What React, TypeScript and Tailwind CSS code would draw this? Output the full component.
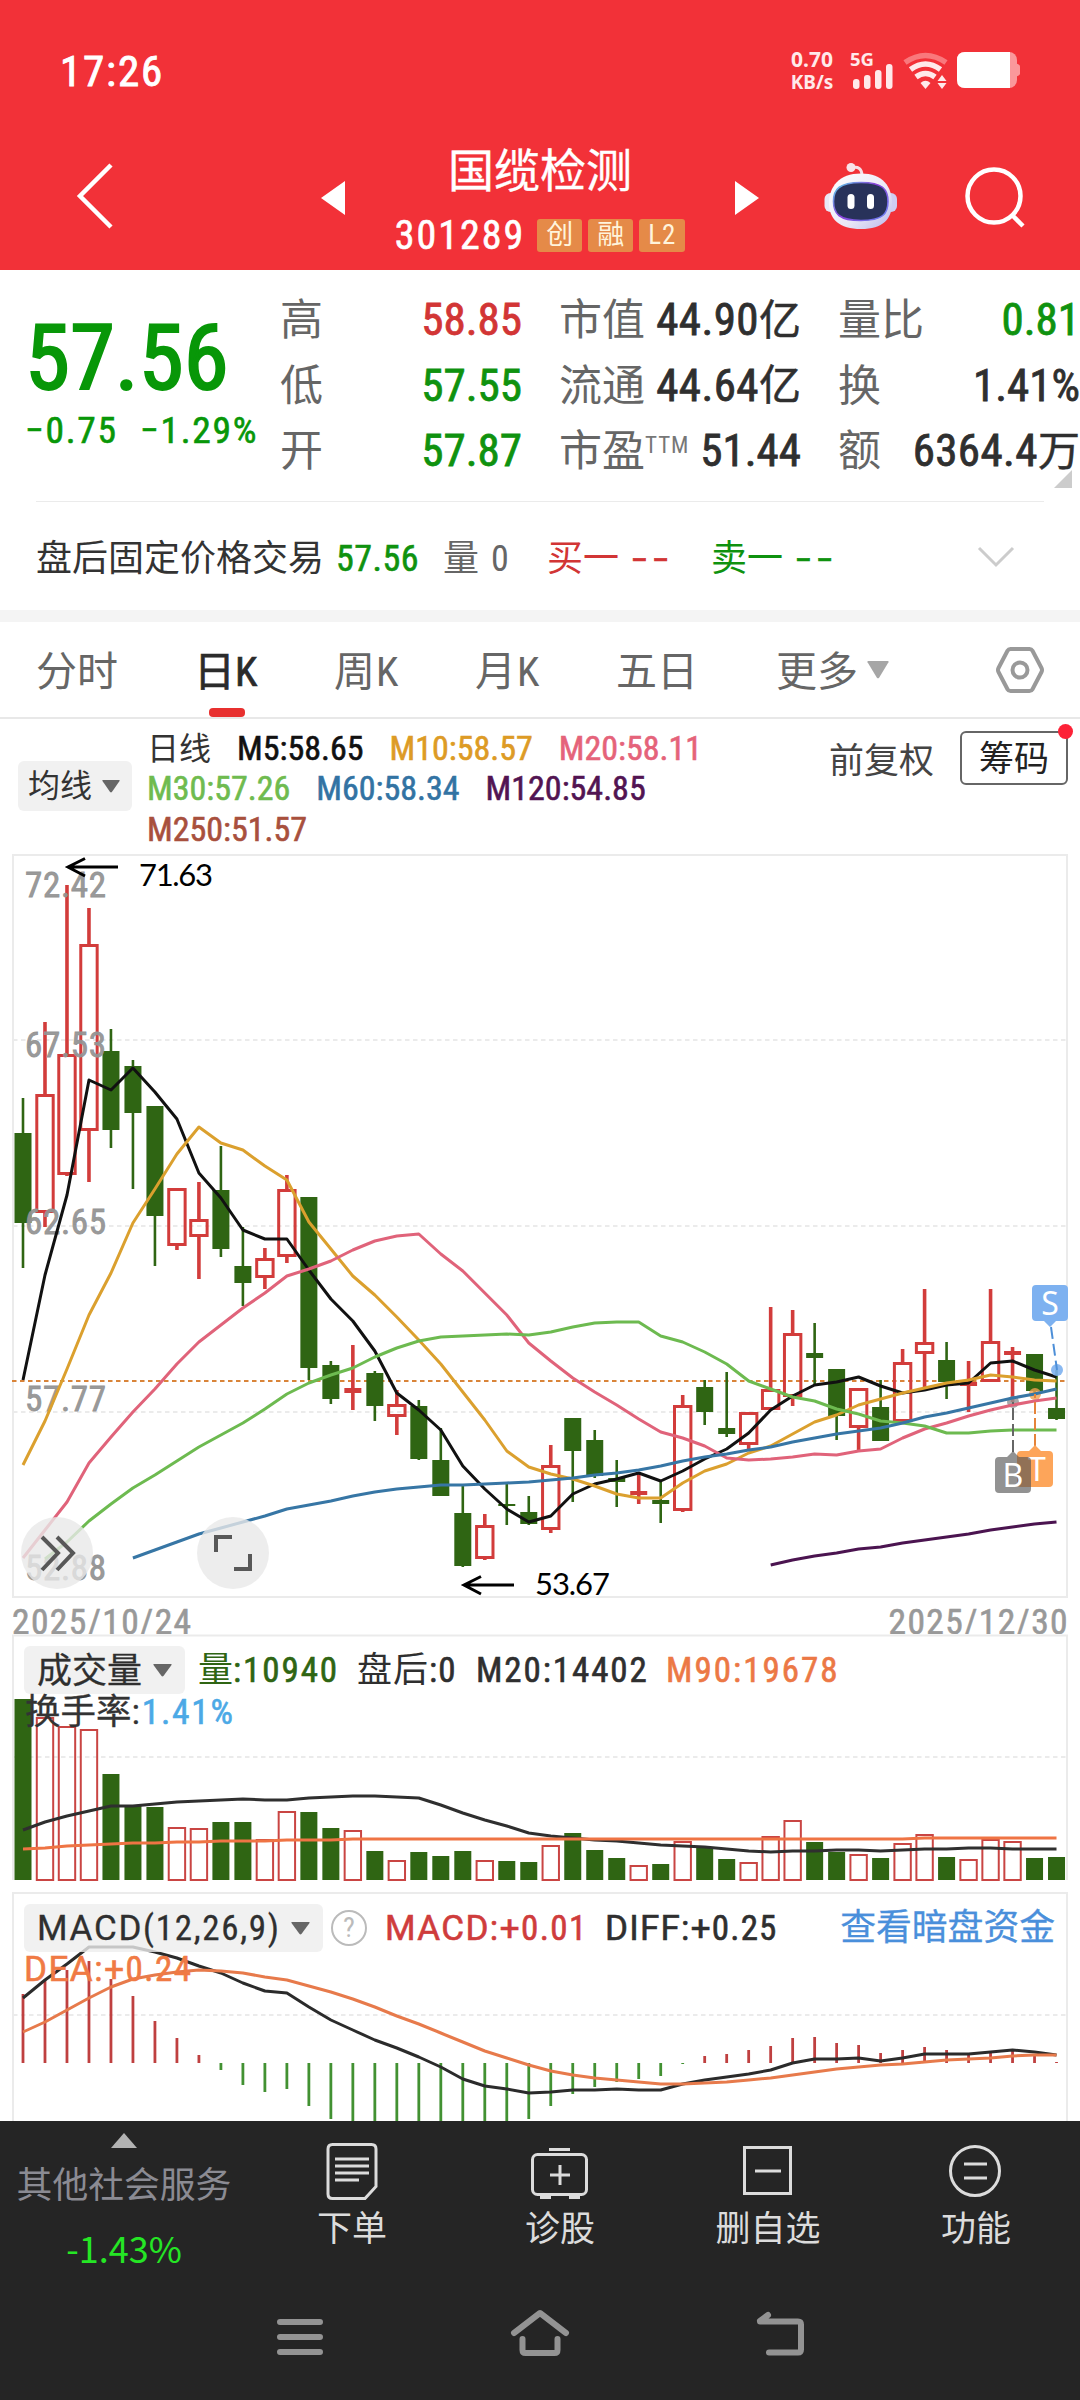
import type { ReactNode } from "react";

// [direction, high, body top, body bottom, low] in chart units
type Candle = ["r" | "g", number, number, number, number];

const CANDLES: Candle[] = [
  ["g", 1098, 1133, 1223, 1268], ["r", 1022, 1094, 1213, 1227], ["r", 885, 1054, 1175, 1176],
  ["r", 908, 944, 1131, 1182], ["g", 1029, 1051, 1130, 1148], ["g", 1060, 1066, 1113, 1189],
  ["g", 1106, 1106, 1216, 1266], ["r", 1188, 1188, 1246, 1250], ["r", 1182, 1219, 1237, 1279],
  ["g", 1146, 1190, 1249, 1257], ["g", 1227, 1266, 1283, 1306], ["r", 1248, 1258, 1278, 1289],
  ["r", 1175, 1189, 1257, 1263], ["g", 1197, 1197, 1368, 1380], ["g", 1361, 1365, 1399, 1404],
  ["r", 1345, 1388, 1393, 1410], ["g", 1371, 1373, 1406, 1421], ["r", 1390, 1404, 1417, 1435],
  ["g", 1400, 1406, 1459, 1460], ["g", 1428, 1460, 1496, 1496], ["g", 1486, 1513, 1566, 1567],
  ["r", 1514, 1525, 1559, 1560], ["g", 1483, 1504, 1506, 1525], ["g", 1496, 1512, 1524, 1525],
  ["r", 1445, 1465, 1530, 1533], ["g", 1418, 1418, 1451, 1502], ["g", 1430, 1440, 1476, 1478],
  ["g", 1460, 1478, 1482, 1507], ["r", 1473, 1491, 1495, 1504], ["g", 1480, 1500, 1504, 1523],
  ["r", 1395, 1405, 1511, 1512], ["g", 1380, 1387, 1412, 1425], ["g", 1372, 1428, 1434, 1437],
  ["r", 1412, 1412, 1445, 1450], ["r", 1307, 1389, 1410, 1410], ["r", 1310, 1333, 1397, 1406],
  ["g", 1323, 1353, 1358, 1385], ["g", 1369, 1369, 1416, 1440], ["r", 1388, 1388, 1428, 1450],
  ["g", 1380, 1407, 1441, 1441], ["r", 1349, 1362, 1422, 1422], ["r", 1289, 1342, 1354, 1387],
  ["g", 1342, 1360, 1382, 1399], ["r", 1361, 1382, 1386, 1412], ["r", 1289, 1341, 1382, 1382],
  ["r", 1347, 1351, 1355, 1402], ["g", 1354, 1354, 1391, 1393], ["g", 1370, 1408, 1419, 1420],
];

const M5 = [1380, 1275, 1195, 1080, 1090, 1068, 1092, 1119, 1173, 1198, 1230, 1239, 1239, 1270, 1299, 1321, 1351, 1393, 1410, 1430, 1466, 1489, 1509, 1522, 1516, 1494, 1484, 1479, 1473, 1481, 1471, 1459, 1449, 1433, 1410, 1396, 1385, 1382, 1377, 1386, 1393, 1390, 1385, 1383, 1363, 1361, 1370, 1377];
const M10 = [1465, 1421, 1369, 1315, 1273, 1223, 1189, 1154, 1127, 1143, 1150, 1166, 1180, 1222, 1249, 1276, 1295, 1317, 1340, 1364, 1392, 1420, 1451, 1467, 1474, 1479, 1486, 1494, 1498, 1498, 1483, 1471, 1464, 1453, 1446, 1434, 1422, 1415, 1405, 1399, 1393, 1388, 1383, 1380, 1375, 1377, 1380, 1381];
const M20 = [1558, 1530, 1502, 1463, 1437, 1412, 1389, 1364, 1342, 1325, 1308, 1293, 1276, 1269, 1261, 1250, 1241, 1236, 1234, 1254, 1271, 1293, 1315, 1343, 1361, 1378, 1392, 1405, 1419, 1432, 1438, 1446, 1458, 1460, 1459, 1457, 1454, 1455, 1451, 1449, 1438, 1429, 1423, 1416, 1410, 1405, 1401, 1398];
const M30 = [1559, 1542, 1521, 1504, 1488, 1475, 1461, 1447, 1435, 1423, 1409, 1394, 1383, 1375, 1368, 1357, 1348, 1341, 1337, 1336, 1335, 1334, 1335, 1332, 1327, 1323, 1322, 1322, 1336, 1342, 1352, 1364, 1381, 1389, 1397, 1401, 1409, 1414, 1421, 1423, 1426, 1433, 1433, 1431, 1430, 1430, 1430];
const M60 = [1558, 1550, 1542, 1534, 1528, 1522, 1516, 1509, 1505, 1501, 1496, 1492, 1489, 1487, 1485, 1485, 1484, 1483, 1482, 1480, 1478, 1475, 1473, 1470, 1466, 1461, 1457, 1454, 1450, 1447, 1442, 1438, 1434, 1431, 1428, 1423, 1417, 1413, 1408, 1403, 1398, 1394, 1389];
const M120 = [1565, 1560, 1556, 1553, 1549, 1547, 1543, 1540, 1537, 1534, 1530, 1527, 1524, 1522];

const VOLUME = [1699, 1717, 1726, 1729, 1774, 1806, 1807, 1827, 1828, 1822, 1822, 1839, 1811, 1812, 1828, 1830, 1851, 1860, 1852, 1856, 1851, 1860, 1861, 1862, 1845, 1833, 1850, 1858, 1865, 1864, 1841, 1848, 1859, 1862, 1836, 1820, 1842, 1852, 1854, 1858, 1843, 1834, 1857, 1859, 1839, 1841, 1858, 1857];
const V20 = [1830, 1822, 1816, 1811, 1806, 1806, 1804, 1802, 1801, 1800, 1799, 1800, 1800, 1798, 1797, 1796, 1796, 1797, 1798, 1805, 1813, 1820, 1826, 1833, 1836, 1838, 1840, 1841, 1843, 1845, 1846, 1847, 1849, 1851, 1852, 1851, 1851, 1850, 1850, 1851, 1850, 1849, 1849, 1848, 1848, 1849, 1849, 1849];
const V90 = [1849, 1848, 1846, 1845, 1844, 1843, 1843, 1842, 1842, 1841, 1841, 1841, 1840, 1840, 1840, ...Array(26).fill(1839), ...Array(7).fill(1838)];

const MACD = [1994, 1980, 1970, 1961, 1979, 1996, 2021, 2038, 2055, 2070, 2085, 2092, 2089, 2106, 2119, 2130, 2130, 2130, 2130, 2130, 2130, 2130, 2130, 2119, 2106, 2094, 2087, 2082, 2079, 2076, 2064, 2056, 2054, 2050, 2046, 2038, 2037, 2043, 2045, 2053, 2050, 2047, 2050, 2053, 2051, 2051, 2056, 2062];
const DIFF = [1998, 1980, 1964, 1947, 1947, 1947, 1952, 1958, 1966, 1973, 1983, 1991, 1993, 2007, 2020, 2030, 2040, 2048, 2057, 2067, 2079, 2086, 2089, 2093, 2092, 2090, 2090, 2089, 2090, 2090, 2084, 2080, 2077, 2074, 2070, 2063, 2059, 2059, 2058, 2061, 2058, 2054, 2054, 2054, 2052, 2050, 2052, 2055];
const DEA = [2032, 2022, 2010, 1998, 1987, 1979, 1975, 1972, 1970, 1971, 1973, 1977, 1980, 1986, 1992, 1999, 2007, 2016, 2024, 2033, 2042, 2051, 2058, 2065, 2071, 2075, 2078, 2080, 2082, 2084, 2084, 2083, 2082, 2080, 2078, 2075, 2072, 2069, 2067, 2065, 2064, 2062, 2060, 2059, 2058, 2056, 2055, 2055];

const RED = "#d23c3b";
const GREEN = "#2f6513";
const px = (i: number) => 23 + i * 21.99;

function Series({ data, start = 0, color }: { data: number[]; start?: number; color: string }) {
  const points = data.map((y, i) => `${px(i + start).toFixed(1)},${y}`).join(" ");
  return <polyline points={points} fill="none" stroke={color} strokeWidth="3" strokeLinejoin="round" />;
}

function Dashes({ y }: { y: number }) {
  return <path d={`M13 ${y}H1066`} stroke="#ebebeb" strokeWidth="2" strokeDasharray="4.5 3.5" />;
}

function Down({ className }: { className: string }) {
  return (
    <svg viewBox="0 0 20 14" preserveAspectRatio="none" className={className}>
      <path d="M1 0h18q1 0 .5 1L11 13q-1 1-2 0L.5 1Q0 0 1 0z" fill="currentColor" />
    </svg>
  );
}

function StatusBar() {
  return (
    <div className="flex h-[110px] items-center pt-8 text-white">
      <span className="ml-[60px] w-[728px] text-[43px] leading-none tracking-[1.800px] [-webkit-text-stroke:0.9px]">17:26</span>
      <div className="flex w-[48px] flex-col items-center font-['Noto_Sans'] text-[21px] leading-[23px] font-bold text-[#ffe9ea]">
        <span>0.70</span>
        <span className="text-[19px]">KB/s</span>
      </div>
      <svg viewBox="840 42 190 60" className="ml-1 h-[60px] w-[190px]">
        <text x="850" y="67" fontSize="17.5" fontWeight="700" fontFamily="Noto Sans" fill="#ffe9ea" textLength="24" lengthAdjust="spacingAndGlyphs">5G</text>
        <g fill="#ffe9ea">
          <rect x="853" y="80" width="6.5" height="10" rx="3" />
          <rect x="864" y="76" width="6.5" height="14" rx="3" />
          <rect x="875" y="71" width="6.5" height="19" rx="3" />
          <rect x="886" y="65" width="6.5" height="25" rx="3" />
          <path d="M925.500 90l-5-6q5-4.500 10 0z" />
          <path d="M942 76l4.500 6h-9zM942 90l4.500-6h-9z" />
        </g>
        <g fill="none" stroke="#ffe9ea" strokeWidth="5.500">
          <path d="M905 63.500q20.500-14 41 0" stroke="#f9787c" />
          <path d="M910.500 70.500q15-11 30 0" />
          <path d="M916 78q9.500-7 19 0" />
        </g>
        <rect x="957" y="53" width="60" height="36" rx="8" fill="#fa989b" />
        <path d="M1016 64.500q4 1 4 3v7q0 2-4 3z" fill="#fa989b" />
        <path d="M965 53h45v36h-45q-8 0-8-8V61q0-8 8-8z" fill="#fff" />
      </svg>
    </div>
  );
}

function Robot() {
  return (
    <svg viewBox="0 0 74 70" className="h-[70px] w-[74px]">
      <defs>
        <linearGradient id="shell" x1="0" y1="0" x2="1" y2="1">
          <stop offset="0" stopColor="#ffffff" />
          <stop offset="0.600" stopColor="#eae8f6" />
          <stop offset="1" stopColor="#b9b8ec" />
        </linearGradient>
        <linearGradient id="rim" x1="0" y1="0" x2="1" y2="0.800">
          <stop offset="0" stopColor="#5bd5ea" />
          <stop offset="0.500" stopColor="#8a3fd8" />
          <stop offset="1" stopColor="#6f7cf0" />
        </linearGradient>
      </defs>
      <path d="M27 7q11-3 11 8" fill="none" stroke="#f6dfe6" strokeWidth="3" />
      <circle cx="27" cy="6.500" r="4.500" fill="#f9e3e9" />
      <rect x="0.500" y="32" width="12" height="19" rx="6" fill="#e9e7f6" />
      <rect x="61" y="32" width="12" height="19" rx="6" fill="#cfcdf2" />
      <path d="M37 12.500C59 12.500 68 26 68 42S59 68 37 68 5 58 5 42s10-29.500 32-29.500z" fill="url(#shell)" />
      <path d="M37 21.500c22 0 27 7 27 19s-5 19-27 19-27.500-7-27.500-19 5.500-19 27.500-19z" fill="#28325a" stroke="url(#rim)" strokeWidth="1.600" />
      <rect x="23.500" y="33" width="7" height="15" rx="3.500" fill="#fff" />
      <rect x="43" y="33" width="7" height="15" rx="3.500" fill="#fff" />
    </svg>
  );
}

function Badge({ children }: { children: ReactNode }) {
  return (
    <span className="flex h-[33px] min-w-[45px] items-center justify-center rounded-[3px] bg-[#e58a48] px-[9px] text-[27px] leading-none text-[#fff4dc]">
      {children}
    </span>
  );
}

function TitleBar() {
  return (
    <div className="flex h-[160px] items-start text-white">
      <svg viewBox="0 0 44 72" className="mt-[50px] ml-[72px] h-[72px] w-[44px]">
        <path d="M39 5L8 36l31 31" fill="none" stroke="#fff" strokeWidth="4.500" />
      </svg>
      <svg viewBox="0 0 24 34" className="mt-[71px] ml-[205px] h-[34px] w-[24px]"><path d="M24 0v34L0 17z" fill="#fff" /></svg>
      <div className="ml-[4px] flex w-[382px] flex-col items-center">
        <h1 className="mt-[36px] text-[46px] leading-[50px] [-webkit-text-stroke:0.4px]">国缆检测</h1>
        <div className="mt-[23px] flex h-[33px] items-center gap-[6px]">
          <span className="mr-[6px] text-[40px] leading-none tracking-[2px] [-webkit-text-stroke:0.6px]">301289</span>
          <Badge>创</Badge>
          <Badge>融</Badge>
          <Badge><span className="tracking-[1px]">L2</span></Badge>
        </div>
      </div>
      <svg viewBox="0 0 24 34" className="mt-[71px] ml-[4px] h-[34px] w-[24px]"><path d="M0 0v34l24-17z" fill="#fff" /></svg>
      <div className="mt-[51px] ml-[65px]"><Robot /></div>
      <svg viewBox="0 0 66 66" className="mt-[54px] ml-[64px] h-[66px] w-[66px]">
        <circle cx="32" cy="32" r="26.500" fill="none" stroke="#fff" strokeWidth="4.500" />
        <path d="M50 51l11 11" stroke="#fff" strokeWidth="4.500" />
      </svg>
    </div>
  );
}

function Stat({ label, value, tone = "text-[#2f2f2f]" }: { label: ReactNode; value: string; tone?: string }) {
  return (
    <div className="flex h-[65.500px] items-center justify-between whitespace-nowrap">
      <span className="flex items-center pt-[2px] text-[43px] leading-none text-[#666]">{label}</span>
      <span className={`text-[45px] leading-none [-webkit-text-stroke:0.8px] ${tone}`}>{value}</span>
    </div>
  );
}

function Unit({ number, unit }: { number: string; unit: string }) {
  return (
    <span className="flex items-center leading-none text-[#2f2f2f]">
      <span className="text-[45px] tracking-[0.400px] [-webkit-text-stroke:0.8px]">{number}</span>
      <span className="pt-[2px] text-[42px] [-webkit-text-stroke:0.5px]">{unit}</span>
    </span>
  );
}

function StatUnit({ label, number, unit }: { label: string; number: string; unit: string }) {
  return (
    <div className="flex h-[65.500px] items-center justify-between whitespace-nowrap">
      <span className="pt-[2px] text-[43px] leading-none text-[#666]">{label}</span>
      <Unit number={number} unit={unit} />
    </div>
  );
}

function Quote() {
  return (
    <section className="relative flex h-[231px] bg-white pt-[17px]">
      <div className="w-[280px] pl-[25px] text-[#089708]">
        <div className="mt-[19px] h-[104px] text-[91px] leading-[104px] [-webkit-text-stroke:2px]">57.56</div>
        <div className="mt-px flex h-[40px] items-center text-[37.500px] leading-none tracking-[1.700px] whitespace-nowrap [-webkit-text-stroke:0.6px]">
          <span className="w-[115px]">−0.75</span>
          <span>−1.29%</span>
        </div>
      </div>
      <div className="w-[242px]">
        <Stat label="高" value="58.85" tone="text-[#d23535]" />
        <Stat label="低" value="57.55" tone="text-[#0f920f]" />
        <Stat label="开" value="57.87" tone="text-[#0f920f]" />
      </div>
      <div className="ml-[37px] w-[242px]">
        <StatUnit label="市值" number="44.90" unit="亿" />
        <StatUnit label="流通" number="44.64" unit="亿" />
        <Stat label={<>市盈<span className="-mt-3 text-[23px] tracking-[1px] text-[#777]">TTM</span></>} value="51.44" />
      </div>
      <div className="ml-[37px] w-[242px]">
        <Stat label="量比" value="0.81" tone="text-[#0f920f]" />
        <Stat label="换" value="1.41%" />
        <StatUnit label="额" number="6364.4" unit="万" />
      </div>
      <svg viewBox="0 0 18 18" className="absolute right-[8px] bottom-[13px] h-[18px] w-[18px]"><path d="M18 0v18H0z" fill="#ccc" /></svg>
    </section>
  );
}

function Blank({ className }: { className: string }) {
  return (
    <span className={className}>
      <span className="inline-block origin-left scale-x-[1.650] tracking-[4px] [-webkit-text-stroke:0.6px]">--</span>
    </span>
  );
}

function AfterHours() {
  return (
    <section className="bg-white">
      <div className="mx-9 h-px bg-[#ebebeb]" />
      <div className="flex h-[108px] items-center pt-[6px] pl-9 text-[36px] leading-none whitespace-nowrap">
        <span className="w-[300px] text-[#333]">盘后固定价格交易</span>
        <span className="w-[107px] text-[#0f920f] tracking-[0.500px] [-webkit-text-stroke:0.6px]">57.56</span>
        <span className="w-[48px] text-[#666]">量</span>
        <span className="w-[56px] text-[#666]">0</span>
        <span className="w-[85px] text-[#d23535]">买一</span>
        <Blank className="w-[79px] text-[#d23535]" />
        <span className="w-[85px] text-[#0f920f]">卖一</span>
        <Blank className="w-[181px] text-[#0f920f]" />
        <svg viewBox="0 0 38 22" className="-mt-1 h-[22px] w-[38px]"><path d="M2 2l17 17L36 2" fill="none" stroke="#ccc" strokeWidth="3" /></svg>
      </div>
      <div className="h-3 bg-[#f4f4f4]" />
    </section>
  );
}

function Tabs() {
  return (
    <nav className="flex h-[97px] items-center border-b-2 border-[#e8e8e8] bg-white pl-9 text-[41px] leading-none whitespace-nowrap text-[#666]">
      <span className="w-[158px] pt-[5px]">分时</span>
      <span className="relative flex h-full w-[140px] items-center pt-[5px] text-[#2b2b2b] [-webkit-text-stroke:0.7px]">
        日K
        <i className="absolute bottom-0 left-[15px] h-[9px] w-[36px] rounded-[4px] bg-[#e8302f]" />
      </span>
      <span className="w-[141px] pt-[5px] tracking-[1px]">周K</span>
      <span className="w-[141px] pt-[5px] tracking-[1px]">月K</span>
      <span className="w-[160px] pt-[5px]">五日</span>
      <span className="w-[91px] pt-[5px]">更多</span>
      <Down className="h-[18px] w-[22px] text-[#a6a6a6]" />
      <svg viewBox="0 0 50 50" className="ml-[106px] h-[50px] w-[50px]" fill="none" stroke="#999" strokeWidth="4">
        <path d="M15.500 4h19q2 0 3 1.800L46.500 23q1 2 0 4L37.500 44.200q-1 1.800-3 1.800h-19q-2 0-3-1.800L3.500 27q-1-2 0-4L12.500 5.800Q13.500 4 15.500 4z" />
        <circle cx="25" cy="25" r="7.500" />
      </svg>
    </nav>
  );
}

function Legend() {
  return (
    <section className="flex h-[130px] bg-white pl-[18px] leading-none whitespace-nowrap">
      <div className="mt-[42px] mr-[15px] flex h-[50px] w-[114px] items-center justify-between rounded-[6px] bg-[#f1f1f1] pr-[12px] pl-[10px] text-[32px] text-[#333]">
        均线
        <Down className="h-[13px] w-[18px] text-[#666]" />
      </div>
      <div className="flex w-[682px] flex-col pt-[9px] text-[34px] [-webkit-text-stroke:0.6px] [&>div]:flex [&>div]:h-[41px] [&>div]:items-center [&>div]:gap-[26px]">
        <div>
          <span className="pt-[2px] text-[32px] text-[#333] [-webkit-text-stroke:0px]">日线</span>
          <span className="text-[#111]">M5:58.65</span>
          <span className="text-[#dd9b25]">M10:58.57</span>
          <span className="text-[#e5637a]">M20:58.11</span>
        </div>
        <div>
          <span className="text-[#6fbb4f]">M30:57.26</span>
          <span className="text-[#3273a3]">M60:58.34</span>
          <span className="text-[#521452]">M120:54.85</span>
        </div>
        <div><span className="text-[#a8503d]">M250:51.57</span></div>
      </div>
      <span className="mt-[25px] w-[131px] text-[35px] text-[#444]">前复权</span>
      <div className="relative mt-[12px] flex h-[54px] w-[108px] items-center justify-center rounded-[6px] border-2 border-[#666] pt-[3px] text-[35px] text-[#222]">
        筹码
        <i className="absolute -top-[9px] -right-[7px] h-[15px] w-[15px] rounded-full bg-[#fd2237]" />
      </div>
    </section>
  );
}

function PriceLabel({ y, children }: { y: number; children: string }) {
  return (
    <text x="25" y={y} fontSize="35" fill="#949494" stroke="#949494" strokeWidth="0.800" fillOpacity="0.950" textLength="81" lengthAdjust="spacing">
      {children}
    </text>
  );
}

function PriceChart() {
  return (
    <svg viewBox="0 849 1080 751" className="block h-[751px] w-[1080px] bg-white">
      <Dashes y={1040} />
      <Dashes y={1226} />
      <Dashes y={1412} />
      <rect x="13" y="855" width="1054" height="742" fill="none" stroke="#ebebeb" strokeWidth="2" />
      <path d="M12 1381H1066" stroke="#d98439" strokeWidth="2" strokeDasharray="4.500 3.500" />
      {CANDLES.map(([dir, high, top, bottom, low], i) => {
        const x = px(i);
        const hollow = dir === "r" && bottom - top > 6;
        const color = dir === "r" ? RED : GREEN;
        return (
          <g key={i} stroke={color} fill="none">
            {top > high && <path d={`M${x} ${high}V${top + 1}`} strokeWidth={dir === "r" ? 3.6 : 2.6} />}
            {low > bottom && <path d={`M${x} ${bottom - 1}V${low}`} strokeWidth={dir === "r" ? 3.6 : 2.6} />}
            {hollow ? (
              <rect x={x - 8.2} y={top + 1.5} width="16.400" height={bottom - top - 3} strokeWidth="3" />
            ) : (
              <rect x={x - 8.5} y={top} width="17" height={bottom - top} fill={color} stroke="none" />
            )}
          </g>
        );
      })}
      <PriceLabel y={897}>72.42</PriceLabel>
      <PriceLabel y={1057}>67.53</PriceLabel>
      <PriceLabel y={1234}>62.65</PriceLabel>
      <PriceLabel y={1411}>57.77</PriceLabel>
      <PriceLabel y={1580}>52.88</PriceLabel>
      <Series data={M5} color="#111" />
      <circle cx="1013" cy="1402" r="6" fill="#929292" fillOpacity="0.800" />
      <circle cx="1035" cy="1394" r="6" fill="#f0a050" fillOpacity="0.800" />
      <circle cx="1057" cy="1370" r="6" fill="#7db1ef" fillOpacity="0.900" />
      <Series data={M10} color="#dba02e" />
      <Series data={M20} color="#e0637a" />
      <Series data={M30} start={1} color="#6dba50" />
      <Series data={M60} start={5} color="#3776a5" />
      <Series data={M120} start={34} color="#4b1450" />
      <g fill="none" stroke="#000" strokeWidth="3">
        <path d="M118 867H68M85 858.500L68 867l17 9" />
        <path d="M514 1585h-50M481 1576.500l-17 8.500 17 9" />
      </g>
      <g fontFamily="Lato" fontSize="31" fill="#000">
        <text x="139" y="886" textLength="74">71.63</text>
        <text x="535" y="1595" textLength="75">53.67</text>
      </g>
      <g fill="none" strokeWidth="2">
        <path d="M1051 1327l6 43" stroke="#4d8fd8" strokeDasharray="12 5" />
        <path d="M1035 1446v-52" stroke="#e5843a" strokeDasharray="12 4" />
        <path d="M1013 1452v-50" stroke="#666" strokeDasharray="12 4" />
      </g>
      <path d="M1036 1285h28q4 0 4 4v28q0 4-4 4h-8l-6 6-6-6h-8q-4 0-4-4v-28q0-4 4-4z" fill="#7db1f0" />
      <path d="M1021 1451h8l6-6 6 6h8q4 0 4 4v28q0 4-4 4h-28q-4 0-4-4v-28q0-4 4-4z" fill="#fda55a" />
      <g fontFamily="Noto Sans" fontSize="32" fill="#fff" textAnchor="middle">
        <text x="1050" y="1315">S</text>
        <text x="1037" y="1481">T</text>
        <path d="M999 1457h8l6-6 6 6h8q4 0 4 4v28q0 4-4 4h-28q-4 0-4-4v-28q0-4 4-4z" fill="#555" fillOpacity="0.640" />
        <text x="1013" y="1487">B</text>
      </g>
      <g fill="#e8e8e8" fillOpacity="0.800">
        <circle cx="57" cy="1553" r="36" />
        <circle cx="233" cy="1553" r="36" />
      </g>
      <g fill="none" stroke="#585858" strokeWidth="4">
        <path d="M42 1537l16 16-16 17M57 1537l16 16-16 17" />
        <path d="M216 1552v-15h16M250 1554v15h-16" />
      </g>
    </svg>
  );
}

function Pill({ children }: { children: ReactNode }) {
  return (
    <span className="flex h-[48px] items-center gap-[11px] rounded-[6px] bg-[#eee]/80 px-[13px] text-[#2f2f2f] [-webkit-text-stroke:0.3px]">
      {children}
      <Down className="h-[13px] w-[19px] text-[#666]" />
    </span>
  );
}

function VolumePanel() {
  return (
    <section className="relative h-[258px] bg-white leading-none whitespace-nowrap">
      <svg viewBox="0 1634 1080 258" className="block h-[258px] w-[1080px]">
        <path d="M13 1880V1635.500H1067V1880" fill="none" stroke="#ebebeb" strokeWidth="2" />
        <Dashes y={1757} />
        {VOLUME.map((y, i) =>
          CANDLES[i][0] === "r" ? (
            <rect key={i} x={px(i) - 8.2} y={y + 1} width="16.400" height={1879 - y} fill="none" stroke="#c94543" strokeWidth="2" />
          ) : (
            <rect key={i} x={px(i) - 8.5} y={y} width="17" height={1880 - y} fill={GREEN} />
          ),
        )}
        <Series data={V20} color="#2f2f2f" />
        <Series data={V90} color="#ef7444" />
      </svg>
      <div className="absolute top-[12px] left-[24px] flex h-[48px] items-center text-[35px] text-[#2f2f2f] [-webkit-text-stroke:0.6px]">
        <Pill><span className="pt-[2px]">成交量</span></Pill>
        <span className="ml-[13px] w-[159px] tracking-[1.900px] text-[#2f6513]"><span className="tracking-normal [-webkit-text-stroke:0px]">量</span>:10940</span>
        <span className="w-[119px] tracking-[1px]"><span className="[-webkit-text-stroke:0px]">盘后</span>:0</span>
        <span className="w-[190px] tracking-[1.900px]">M20:14402</span>
        <span className="tracking-[2px] text-[#ec7845]">M90:19678</span>
      </div>
      <div className="absolute top-[60px] left-[25px] flex h-[38px] items-center text-[35.500px] text-[#333] [-webkit-text-stroke:0.3px]">
        换手率:<span className="ml-[2px] tracking-[1.700px] text-[#4ba9e6] [-webkit-text-stroke:0.6px]">1.41%</span>
      </div>
    </section>
  );
}

function MacdPanel() {
  return (
    <section className="relative h-[229px] overflow-hidden bg-white leading-none whitespace-nowrap">
      <svg viewBox="0 1892 1080 229" className="block h-[229px] w-[1080px]">
        <path d="M13 2130V1893H1067V2130" fill="none" stroke="#ebebeb" strokeWidth="2" />
        <Dashes y={2015} />
        {MACD.map((y, i) => (
          <path key={i} d={`M${px(i)} 2063V${y}`} stroke={y < 2063 ? "#bf4040" : "#429132"} strokeWidth="2.800" />
        ))}
        <Series data={DIFF} color="#2b2b2b" />
        <Series data={DEA} color="#e77a4b" />
      </svg>
      <div className="absolute top-[12px] left-[24px] flex h-[48px] w-[1033px] items-center text-[35px] text-[#2f2f2f] [-webkit-text-stroke:0.6px]">
        <Pill><span className="w-[243px] tracking-[1.700px]"><span className="[font-stretch:100%]">MACD</span>(12,26,9)</span></Pill>
        <span className="ml-[8px] flex h-[36px] w-[36px] items-center justify-center rounded-full border-[2.500px] border-[#bbb] text-[28px] text-[#bbb] [-webkit-text-stroke:0px]">?</span>
        <span className="ml-[18px] w-[220px] tracking-[1.400px] text-[#cf3c3c]"><span className="[font-stretch:100%]">MACD:+</span>0.01</span>
        <span className="tracking-[1.200px]"><span className="[font-stretch:100%]">DIFF:+</span>0.25</span>
        <span className="mr-[2px] ml-auto pt-[2px] text-[35.800px] text-[#4a8fdb] [-webkit-text-stroke:0.3px]">查看暗盘资金</span>
      </div>
      <div className="absolute top-[58px] left-[24px] flex h-[38px] items-center text-[35px] tracking-[1.500px] text-[#f07a44] [-webkit-text-stroke:0.6px]">
        <span className="[font-stretch:100%]">DEA:+</span>0.24
      </div>
    </section>
  );
}

function Action({ label, children }: { label: string; children: ReactNode }) {
  return (
    <div className="flex w-[208px] flex-col items-center pt-[18px]">
      <svg viewBox="0 0 64 64" className="h-[64px] w-[64px]" fill="none" stroke="#dcdcdc" strokeWidth="3">{children}</svg>
      <span className="mt-[9px] text-[35px] leading-[36px] text-[#dcdcdc]">{label}</span>
    </div>
  );
}

function BottomBar() {
  return (
    <footer className="h-[279px] bg-[#252525]">
      <div className="flex h-[165px]">
        <div className="flex w-[248px] flex-col items-center pt-[12px] leading-none">
          <svg viewBox="0 0 26 15" className="h-[15px] w-[26px]"><path d="M13 0l13 15H0z" fill="#b3b3b3" /></svg>
          <span className="mt-[21px] text-[35.800px] text-[#8b8b93]">其他社会服务</span>
          <span className="mt-[24px] font-['Noto_Sans_CJK_SC'] text-[36px] text-[#25e625]">-1.43%</span>
        </div>
        <Action label="下单">
          <path d="M12.500 5.500h39q4.500 0 4.500 4.500v37.500L45 59.500H12.500q-4.500 0-4.500-4.500V10q0-4.500 4.500-4.500z" />
          <path d="M15 20h34M15 27h34M15 34h34M15 41h24" />
        </Action>
        <Action label="诊股">
          <rect x="4.500" y="15.500" width="54" height="40" rx="5" />
          <path d="M21 10.500h21M32 26v20M22 36h20M12 58.500h11M41 58.500h11" />
        </Action>
        <Action label="删自选">
          <rect x="8.500" y="8.500" width="46" height="46" />
          <path d="M19 32h26" />
        </Action>
        <Action label="功能">
          <circle cx="31" cy="32" r="24.500" />
          <path d="M20 25h23M20 39h23" />
        </Action>
      </div>
      <svg viewBox="0 0 540 60" className="ml-[270px] block h-[60px] w-[540px] translate-y-[15px]" fill="none" stroke="#939393" strokeWidth="6" strokeLinecap="round" strokeLinejoin="round">
        <path d="M10 21h40M10 36h40M10 51h40" />
        <path d="M244 32l26-20 26 20M252.500 38v11q0 3 3 3h29q3 0 3-3v-11" />
        <path d="M490 20.500h38q3 0 3 3v25q0 3-3 3h-29M498 14l-8 6" />
      </svg>
    </footer>
  );
}

export default function App() {
  return (
    <main className="w-[1080px] bg-white font-['Roboto','Noto_Sans_CJK_SC',sans-serif] font-normal [font-stretch:87%]">
      <header className="bg-[#f23138]">
        <StatusBar />
        <TitleBar />
      </header>
      <Quote />
      <AfterHours />
      <Tabs />
      <Legend />
      <PriceChart />
      <div className="flex h-[34px] items-center justify-between bg-white pt-[12px] pr-[11px] pl-[12px] text-[35.500px] leading-none tracking-[1.400px] text-[#999] [-webkit-text-stroke:0.6px]">
        <span>2025/10/24</span>
        <span>2025/12/30</span>
      </div>
      <VolumePanel />
      <MacdPanel />
      <BottomBar />
    </main>
  );
}
